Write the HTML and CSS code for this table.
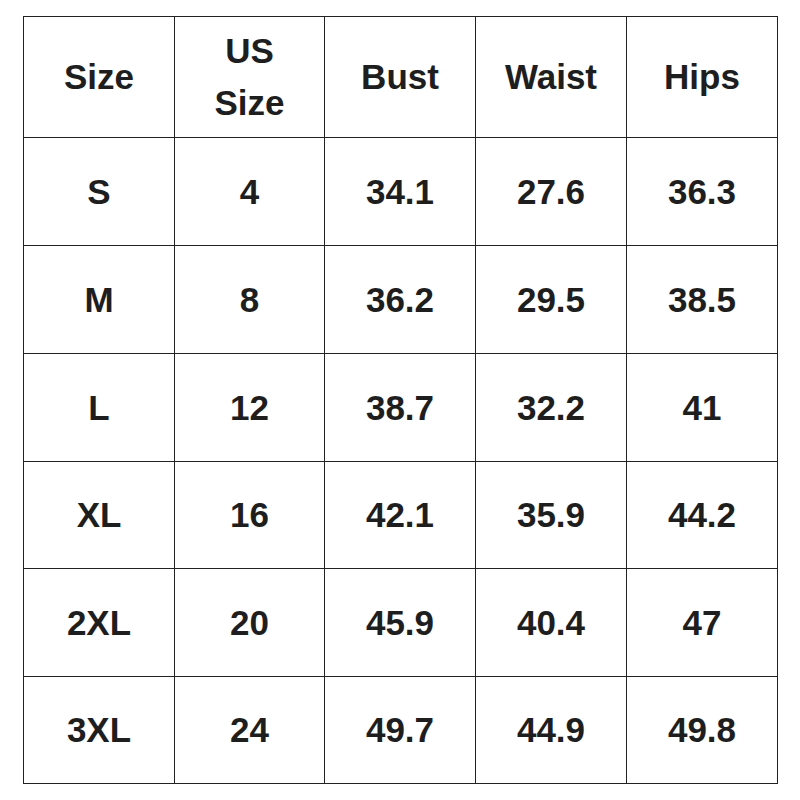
FILE: index.html
```html
<!DOCTYPE html>
<html>
<head>
<meta charset="utf-8">
<link rel="stylesheet" href="styles.css">
</head>
<body>
<table class="chart">
  <colgroup>
    <col class="c"><col class="c narrow"><col class="c"><col class="c"><col class="c">
  </colgroup>
  <tr class="head"><th>Size</th><th class="two">US<br>Size</th><th>Bust</th><th>Waist</th><th>Hips</th></tr>
  <tr><td>S</td><td>4</td><td>34.1</td><td>27.6</td><td>36.3</td></tr>
  <tr><td>M</td><td>8</td><td>36.2</td><td>29.5</td><td>38.5</td></tr>
  <tr><td>L</td><td>12</td><td>38.7</td><td>32.2</td><td>41</td></tr>
  <tr class="short"><td>XL</td><td>16</td><td>42.1</td><td>35.9</td><td>44.2</td></tr>
  <tr><td>2XL</td><td>20</td><td>45.9</td><td>40.4</td><td>47</td></tr>
  <tr class="short"><td>3XL</td><td>24</td><td>49.7</td><td>44.9</td><td>49.8</td></tr>
</table>
</body>
</html>
```
FILE: styles.css
```css
html, body {
  margin: 0;
  padding: 0;
  background: #fff;
}
body {
  padding: 16px 0 0 23px;
}
.chart {
  border-collapse: collapse;
  table-layout: fixed;
  width: 755px;
  font-family: "Liberation Sans", Arial, sans-serif;
  font-weight: bold;
  font-size: 35px;
  color: #1e1e1e;
}
.chart col.c {
  width: 151px;
}
.chart col.narrow {
  width: 150px;
}
.chart th, .chart td {
  border: 1px solid #222;
  text-align: center;
  vertical-align: middle;
  padding: 0;
  font-weight: bold;
}
.chart tr {
  height: 108px;
}
.chart tr.short {
  height: 107px;
}
.chart tr.head {
  height: 121px;
}
.chart th.two {
  line-height: 52px;
}
```
